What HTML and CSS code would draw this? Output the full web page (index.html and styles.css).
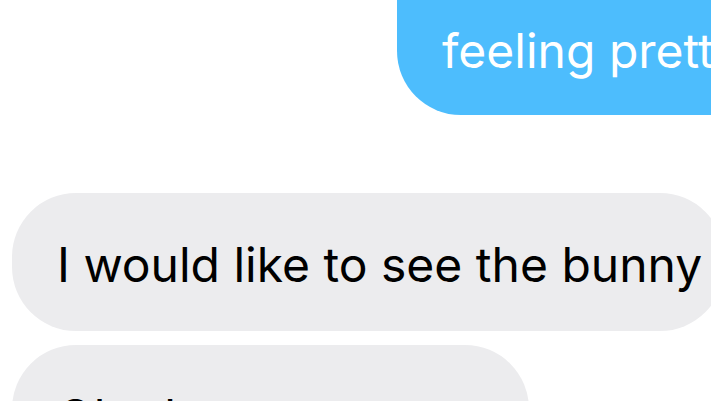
FILE: index.html
```html
<!DOCTYPE html>
<html lang="en">
<head>
  <meta charset="UTF-8">
  <meta name="viewport" content="width=device-width, initial-scale=1.0">
  <title>Messages</title>
  <link rel="stylesheet" href="styles.css">
</head>
<body>
  <!-- Message thread, zoomed in -->
  <div class="thread">
    <div class="row sent">
      <div class="bubble blue">feeling pretty good today</div>
    </div>
    <div class="row received">
      <div class="bubble gray wide">I would like to see the bunny</div>
    </div>
    <div class="row received">
      <div class="bubble gray wide">Oh ok cute, so cozy</div>
    </div>
  </div>
</body>
</html>
```

FILE: styles.css
```css
/* Base page */
body {
  margin: 0;
  padding: 0;
  background-color: #ffffff;
  font-family: Inter, "Noto Sans", sans-serif;
  overflow: hidden;
}

/* Thread column */
.thread {
  width: 711px;
  height: 401px;
  overflow: hidden;
  display: flex;
  flex-direction: column;
}

.row {
  display: flex;
  flex-shrink: 0;
}

/* Bubble base */
.bubble {
  box-sizing: border-box;
  font-size: 48px;
  line-height: 58px;
  white-space: nowrap;
  flex-shrink: 0;
}

/* Outgoing message, cut off at the top and right */
.blue {
  margin-left: 397px;
  height: 115px;
  padding: 22px 0 0 45px;
  background-color: #4dbdfd;
  color: #ffffff;
  border-radius: 0 0 0 64px;
}

/* Incoming messages */
.received {
  padding-left: 12px;
}

.gray {
  height: 138px;
  padding: 43px 45px 0 45px;
  background-color: #ececee;
  color: #000000;
  border-radius: 64px;
}

.received + .received {
  margin-top: 14px;
}

.sent + .received {
  margin-top: 78px;
}

.wide {
  padding-right: 22px;
}
```
